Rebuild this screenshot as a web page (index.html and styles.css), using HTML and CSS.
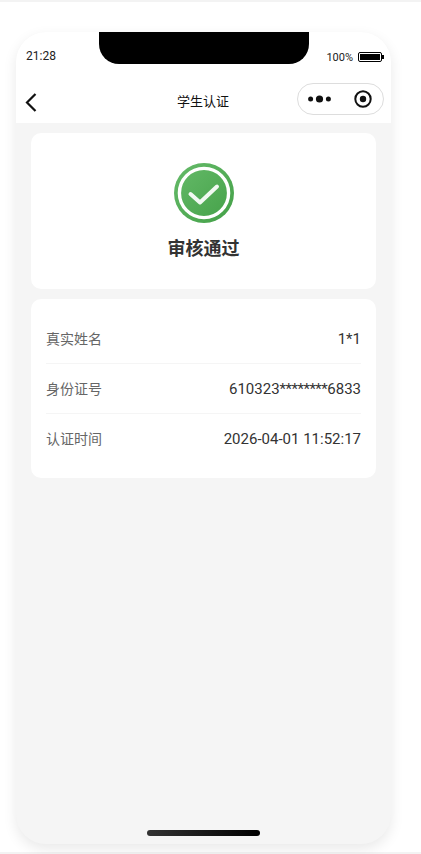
FILE: index.html
```html
<!DOCTYPE html>
<html lang="zh-CN">
<head>
  <meta charset="UTF-8">
  <title>学生认证</title>
  <link rel="stylesheet" href="styles.css">
</head>
<body>
  <div class="frame">
    <div class="phone">
      <div class="notch"></div>

      <div class="status-bar">
        <span class="time">21:28</span>
        <div class="battery-wrap">
          <span class="percent">100%</span>
          <span class="battery"><span class="battery-fill"></span></span>
          <span class="battery-tip"></span>
        </div>
      </div>

      <div class="nav-bar">
        <svg class="back" width="14" height="20" viewBox="0 0 14 20">
          <path d="M11.5 2 L3 10.5 L11.5 19" fill="none" stroke="#111" stroke-width="2.2"/>
        </svg>
        <span class="nav-title">学生认证</span>
        <div class="capsule">
          <svg class="dots" width="23" height="8" viewBox="0 0 23 8">
            <circle cx="2.6" cy="4" r="2.5" fill="#111"/>
            <circle cx="11.5" cy="4" r="3.6" fill="#111"/>
            <circle cx="20.4" cy="4" r="2.5" fill="#111"/>
          </svg>
          <svg width="18" height="18" viewBox="0 0 18 18">
            <circle cx="9" cy="9" r="7.7" fill="none" stroke="#111" stroke-width="2"/>
            <circle cx="9" cy="9" r="3.2" fill="#111"/>
          </svg>
        </div>
      </div>

      <div class="content">
        <div class="card result-card">
          <svg class="check" width="60" height="60" viewBox="0 0 60 60">
            <defs>
              <linearGradient id="green" x1="0" y1="0" x2="1" y2="1">
                <stop offset="0" stop-color="#66bb6a"/>
                <stop offset="1" stop-color="#43a047"/>
              </linearGradient>
            </defs>
            <circle cx="30" cy="30" r="30" fill="url(#green)"/>
            <circle cx="30" cy="30" r="24.6" fill="none" stroke="#fff" stroke-width="3.4"/>
            <path d="M16.5 31 L26 39.5 L43 23.5" fill="none" stroke="#fff" stroke-opacity="0.92" stroke-width="4" stroke-linecap="round" stroke-linejoin="round"/>
          </svg>
          <div class="result-text">审核通过</div>
        </div>

        <div class="card info-card">
          <div class="info-row">
            <span class="info-label">真实姓名</span>
            <span class="info-value">1*1</span>
          </div>
          <div class="info-row">
            <span class="info-label">身份证号</span>
            <span class="info-value">610323<span class="mask">********</span>6833</span>
          </div>
          <div class="info-row">
            <span class="info-label">认证时间</span>
            <span class="info-value">2026-04-01 11:52:17</span>
          </div>
        </div>
      </div>

      <div class="home-bar"></div>
    </div>
  </div>
</body>
</html>
```

FILE: styles.css
```css
html, body { margin: 0; padding: 0; height: 100%; background: #fff; }
body { font-family: Roboto, "Noto Sans CJK SC", sans-serif; overflow: hidden; }

.frame {
  height: 854px;
  box-sizing: border-box;
  border-top: 2px solid #f3f3f3;
  border-bottom: 2px solid #f3f3f3;
  padding: 30px 0 0 16px;
}

.phone {
  position: relative;
  width: 375px;
  height: 812px;
  border-radius: 30px;
  overflow: hidden;
  background: #f5f5f5;
  display: flex;
  flex-direction: column;
  box-shadow: 0 5px 14px rgba(0, 0, 0, 0.09);
}

.notch {
  position: absolute;
  top: 0;
  left: 83px;
  width: 210px;
  height: 32px;
  background: #000;
  border-radius: 0 0 20px 20px;
}

/* status bar */
.status-bar {
  height: 44px;
  background: #fff;
  box-sizing: border-box;
  padding: 16px 7px 0 10px;
  display: flex;
  justify-content: space-between;
  font-size: 12px;
  line-height: 16px;
  color: #222;
}
.battery-wrap { display: flex; align-items: center; height: 10px; margin-top: 4px; }
.percent { font-size: 11px; margin-right: 5px; padding-top: 2px; }
.battery {
  width: 24px;
  height: 10px;
  box-sizing: border-box;
  border: 1.5px solid #000;
  border-radius: 2px;
  padding: 1px;
  display: block;
}
.battery-fill { display: block; height: 100%; background: #000; }
.battery-tip { width: 2px; height: 4px; background: #000; }

/* nav */
.nav-bar {
  height: 47px;
  background: #fff;
  box-sizing: border-box;
  padding: 0 7px 0 8px;
  display: flex;
  align-items: center;
  justify-content: space-between;
  position: relative;
}
.back { margin-top: 4px; }
.nav-title {
  position: absolute;
  left: 0;
  right: 0;
  top: 16px;
  text-align: center;
  font-size: 13px;
  line-height: 20px;
  color: #111;
  padding-right: 1px;
}
.capsule {
  width: 87px;
  height: 32px;
  box-sizing: border-box;
  border: 1px solid #ddd;
  border-radius: 16px;
  padding: 0 11px 0 10px;
  display: flex;
  align-items: center;
  justify-content: space-between;
  margin-top: -2px;
}

.content { flex: 1; padding: 10px 15px 0; }

.card { background: #fff; border-radius: 10px; margin-bottom: 10px; }

.result-card {
  height: 156px;
  box-sizing: border-box;
  padding-top: 30px;
  display: flex;
  flex-direction: column;
  align-items: center;
}
.result-text {
  margin-top: 13px;
  font-size: 18px;
  line-height: 26px;
  font-weight: 700;
  color: #333;
}

.info-card { height: 179px; box-sizing: border-box; padding: 15px; }
.info-row {
  height: 50px;
  display: flex;
  align-items: center;
  justify-content: space-between;
  border-bottom: 1px solid #f5f5f5;
  box-sizing: border-box;
  font-size: 14px;
  line-height: 20px;
}
.info-row:last-child { border-bottom: none; }
.info-label { color: #666; }
.info-value { color: #333; font-size: 15px; }
.mask { letter-spacing: -0.5px; }

.home-bar {
  position: absolute;
  bottom: 8px;
  left: 131px;
  width: 113px;
  height: 6px;
  border-radius: 3px;
  background: linear-gradient(90deg, #333, #000);
}
```
